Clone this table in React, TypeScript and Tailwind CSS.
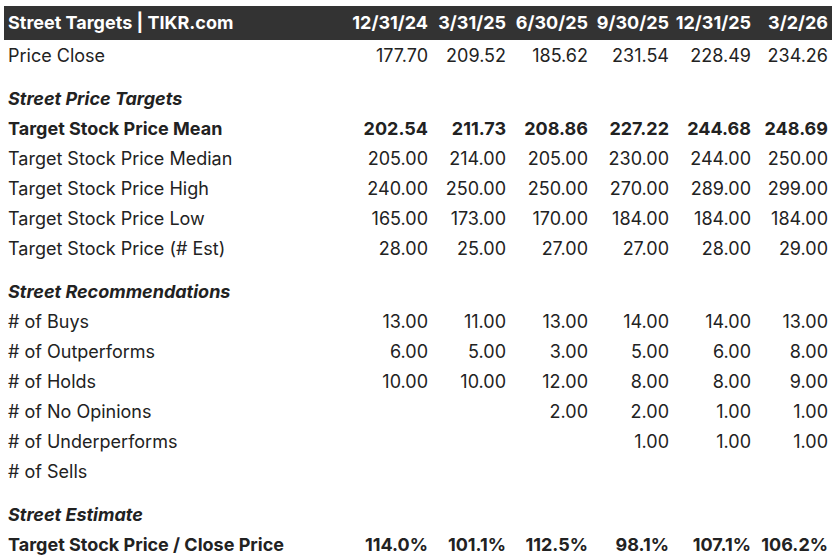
const dates = ["12/31/24", "3/31/25", "6/30/25", "9/30/25", "12/31/25", "3/2/26"];

type Row =
  | { kind: "section"; label: string }
  | { kind: "row"; label: string; values: string[]; bold?: boolean };

const rows: Row[] = [
  { kind: "row", label: "Price Close", values: ["177.70", "209.52", "185.62", "231.54", "228.49", "234.26"] },
  { kind: "section", label: "Street Price Targets" },
  { kind: "row", label: "Target Stock Price Mean", bold: true, values: ["202.54", "211.73", "208.86", "227.22", "244.68", "248.69"] },
  { kind: "row", label: "Target Stock Price Median", values: ["205.00", "214.00", "205.00", "230.00", "244.00", "250.00"] },
  { kind: "row", label: "Target Stock Price High", values: ["240.00", "250.00", "250.00", "270.00", "289.00", "299.00"] },
  { kind: "row", label: "Target Stock Price Low", values: ["165.00", "173.00", "170.00", "184.00", "184.00", "184.00"] },
  { kind: "row", label: "Target Stock Price (# Est)", values: ["28.00", "25.00", "27.00", "27.00", "28.00", "29.00"] },
  { kind: "section", label: "Street Recommendations" },
  { kind: "row", label: "# of Buys", values: ["13.00", "11.00", "13.00", "14.00", "14.00", "13.00"] },
  { kind: "row", label: "# of Outperforms", values: ["6.00", "5.00", "3.00", "5.00", "6.00", "8.00"] },
  { kind: "row", label: "# of Holds", values: ["10.00", "10.00", "12.00", "8.00", "8.00", "9.00"] },
  { kind: "row", label: "# of No Opinions", values: ["", "", "2.00", "2.00", "1.00", "1.00"] },
  { kind: "row", label: "# of Underperforms", values: ["", "", "", "1.00", "1.00", "1.00"] },
  { kind: "row", label: "# of Sells", values: ["", "", "", "", "", ""] },
  { kind: "section", label: "Street Estimate" },
  { kind: "row", label: "Target Stock Price / Close Price", bold: true, values: ["114.0%", "101.1%", "112.5%", "98.1%", "107.1%", "106.2%"] },
];

const grid = "grid grid-cols-[1fr_82px_78px_82px_81px_82px_77px]";

const App = () => {
  return (
    <div
      className="w-[838px] h-[560px] bg-white pt-[6px] pl-[4px] pr-[6px] text-[18px] leading-[22px] text-[#222] overflow-hidden"
      style={{ fontFamily: "Inter, 'Liberation Sans', sans-serif" }}
    >
      <div className={`${grid} h-[34px] items-center bg-[#333] text-white font-bold`}>
        <span className="pl-1">Street Targets | TIKR.com</span>
        {dates.map((d) => (
          <span key={d} className="text-right pr-1">
            {d}
          </span>
        ))}
      </div>
      {rows.map((r, i) =>
        r.kind === "section" ? (
          <div key={i} className="h-[43px] pt-[15px] flex items-center pl-1 font-bold italic">
            {r.label}
          </div>
        ) : (
          <div key={i} className={`${grid} h-[30px] pt-[2px] items-center ${r.bold ? "font-bold" : ""}`}>
            <span className="pl-1">{r.label}</span>
            {r.values.map((v, j) => (
              <span key={j} className="text-right pr-1">
                {v}
              </span>
            ))}
          </div>
        )
      )}
    </div>
  );
};

export default App;
